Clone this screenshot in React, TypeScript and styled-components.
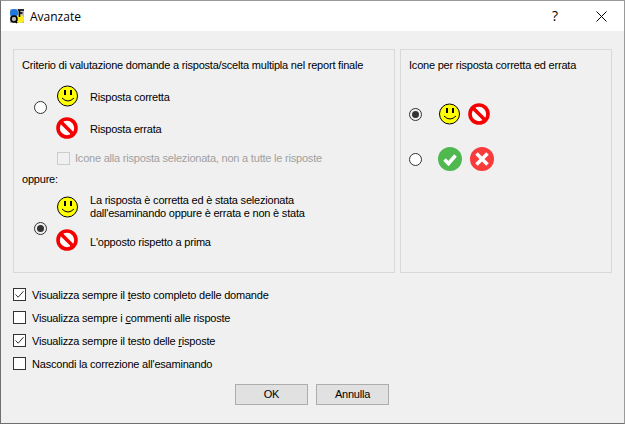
import React from "react";
import styled, { createGlobalStyle } from "styled-components";

const Global = createGlobalStyle`
  html, body { margin: 0; padding: 0; background: #f0f0f0; }
  body { font-family: "Liberation Sans", Arial, sans-serif; font-size: 11px; letter-spacing: -0.21px; color: #000; }
`;

const Win = styled.div`
  width: 625px; height: 424px; box-sizing: border-box;
  border: 1px solid #6f6f6f; border-top-color: #9a9a9a; border-right-color: #9a9a9a;
  display: flex; flex-direction: column; background: #f0f0f0; overflow: hidden;
`;
const TitleBar = styled.div`
  height: 30px; background: #fff; display: flex; align-items: center; flex: none;
`;
const AppIcon = styled.svg`width: 16px; height: 16px; margin-left: 8px; flex: none;`;
const Title = styled.div`margin-left: 5px; font-family: "Open Sans", sans-serif; font-size: 12px; letter-spacing: 0; flex: 1; color: #000;`;
const Help = styled.div`width: 46px; text-align: center; font-family: "Open Sans", sans-serif; font-size: 14px; letter-spacing: 0; line-height: 16px;`;
const CloseBtn = styled.div`width: 46px; height: 30px; display: flex; align-items: center; justify-content: center;`;

const Content = styled.div`flex: 1; display: flex; flex-direction: column; padding: 18px 12px 0;`;
const Panels = styled.div`display: flex; gap: 5px; height: 224px;`;
const Panel = styled.div<{ $w: number }>`
  width: ${p => p.$w}px; box-sizing: border-box; border: 1px solid #d9d9d9;
  padding: 7px 8px 0; display: flex; flex-direction: column;
`;
const Line = styled.div`line-height: 16px; white-space: nowrap;`;
const Group = styled.div<{ $mt: number; $gap: number }>`
  display: grid; grid-template-columns: 34px 34px 1fr; margin-top: ${p => p.$mt}px; row-gap: ${p => p.$gap}px;
`;
const RadioCell = styled.div<{ $mt: number }>`
  grid-column: 1; grid-row: 1 / span 2; margin-left: 12px; margin-top: ${p => p.$mt}px;
`;
const IconCell = styled.div`grid-column: 2; height: 22px; align-self: center;`;
const TextCell = styled.div`grid-column: 3; align-self: center; line-height: 13px; white-space: nowrap;`;
const LowText = styled(TextCell)<{ $pt: number }>`padding-top: ${p => p.$pt}px;`;
const DisabledRow = styled.div`
  display: flex; align-items: center; gap: 5px; margin-top: 13px; margin-left: 35px; color: #a0a0a0; line-height: 13px;
`;
const Oppure = styled(Line)`margin-top: 6px;`;
const RadioCircle = styled.span<{ $on?: boolean }>`
  display: block; width: 13px; height: 13px; box-sizing: border-box; border-radius: 50%; flex: none;
  border: 1px solid #333; background: ${p => (p.$on ? "transparent" : "#fff")}; position: relative;
  ${p => p.$on ? `&::after { content: ""; position: absolute; left: 2px; top: 2px; width: 7px; height: 7px; border-radius: 50%; background: #333; }` : ""}
`;
const Box = styled.span<{ $off?: boolean }>`
  display: flex; width: 13px; height: 13px; box-sizing: border-box; flex: none;
  border: 1px solid ${p => (p.$off ? "#cccccc" : "#333")}; background: ${p => (p.$off ? "#f0f0f0" : "#fff")};
  align-items: center; justify-content: center;
`;
const IconRow = styled.div<{ $mt: number }>`
  display: flex; align-items: center; margin-top: ${p => p.$mt}px;
`;
const IconPair = styled.div<{ $gap: number; $ml: number }>`
  display: flex; align-items: center; gap: ${p => p.$gap}px; margin-left: ${p => p.$ml}px;
`;
const Checks = styled.div`display: flex; flex-direction: column; margin-top: 15px; gap: 10px;`;
const CheckRow = styled.div`display: flex; align-items: center; gap: 6px; height: 13px; line-height: 13px; white-space: nowrap;`;
const CheckText = styled.span`padding-top: 2px;`;
const U = styled.span`text-decoration: underline;`;
const Buttons = styled.div`display: flex; gap: 8px; margin-top: 14px; margin-left: 222px;`;
const Btn = styled.button`
  width: 73px; height: 21px; box-sizing: border-box; padding: 0; border: 1px solid #adadad; background: #e1e1e1;
  font: inherit; letter-spacing: inherit; color: #000; line-height: 17px;
`;

const Smile = () => (
  <svg width="22" height="22" viewBox="0 0 22 22" shapeRendering="crispEdges" display="block">
    <circle cx="11.5" cy="11" r="10" fill="#ffff00" stroke="#000" strokeWidth="1" shapeRendering="auto" />
    <rect x="8" y="5" width="2" height="5" fill="#000" />
    <rect x="14" y="5" width="2" height="5" fill="#000" />
    <path d="M6 13q6 6 12 0" fill="none" stroke="#000" strokeWidth="1" shapeRendering="auto" />
  </svg>
);
const Stop = () => (
  <svg width="22" height="22" viewBox="0 0 22 22" display="block">
    <circle cx="11" cy="11" r="9" fill="#fff" stroke="#f50000" strokeWidth="3.6" />
    <path d="M5 5L17 17" stroke="#f50000" strokeWidth="3.6" />
  </svg>
);
const Ok = () => (
  <svg width="24" height="24" viewBox="0 0 24 24" display="block">
    <circle cx="12" cy="12" r="12" fill="#4fb84f" />
    <path d="M6.5 12.5L10.5 16.5L17.5 8.5" fill="none" stroke="#fff" strokeWidth="3.6" />
  </svg>
);
const Ko = () => (
  <svg width="24" height="24" viewBox="0 0 24 24" display="block">
    <circle cx="12" cy="12" r="12" fill="#f83c3c" />
    <path d="M6.5 6.5L17.5 17.5M17.5 6.5L6.5 17.5" fill="none" stroke="#fff" strokeWidth="3.6" />
  </svg>
);
const Tick = () => (
  <svg width="11" height="11" viewBox="0 0 11 11">
    <path d="M1.5 5.5L4.2 8.2L9.5 2.2" fill="none" stroke="#333" strokeWidth="1" />
  </svg>
);

export default function App() {
  return (
    <Win>
      <Global />
      <TitleBar>
        <AppIcon viewBox="0 0 16 16">
          <rect x="1" y="1" width="14" height="14" fill="#b8b8b8" />
          <circle cx="5" cy="5" r="4" fill="#1f78e0" />
          <circle cx="11" cy="11" r="4" fill="#ffef20" />
          <path d="M9 2h6M10.5 2v7M10.5 5h3" stroke="#000" strokeWidth="1.6" fill="none" />
          <circle cx="5" cy="11" r="3" fill="none" stroke="#000" strokeWidth="1.6" />
          <path d="M6 13l2 2" stroke="#000" strokeWidth="1.6" />
        </AppIcon>
        <Title>Avanzate</Title>
        <Help>?</Help>
        <CloseBtn>
          <svg width="11" height="11" viewBox="0 0 11 11"><path d="M0.5 0.5L10.5 10.5M10.5 0.5L0.5 10.5" stroke="#000" fill="none" /></svg>
        </CloseBtn>
      </TitleBar>
      <Content>
        <Panels>
          <Panel $w={382}>
            <Line>Criterio di valutazione domande a risposta/scelta multipla nel report finale</Line>
            <Group $mt={12} $gap={10}>
              <RadioCell $mt={16}><RadioCircle /></RadioCell>
              <IconCell><Smile /></IconCell>
              <LowText $pt={2}>Risposta corretta</LowText>
              <IconCell><Stop /></IconCell>
              <LowText $pt={2}>Risposta errata</LowText>
            </Group>
            <DisabledRow><Box $off />Icone alla risposta selezionata, non a tutte le risposte</DisabledRow>
            <Oppure>oppure:</Oppure>
            <Group $mt={7} $gap={9}>
              <RadioCell $mt={28}><RadioCircle $on /></RadioCell>
              <IconCell><Smile /></IconCell>
              <TextCell>La risposta è corretta ed è stata selezionata<br />dall'esaminando oppure è errata e non è stata</TextCell>
              <IconCell><Stop /></IconCell>
              <LowText $pt={4}>L'opposto rispetto a prima</LowText>
            </Group>
          </Panel>
          <Panel $w={212}>
            <Line>Icone per risposta corretta ed errata</Line>
            <IconRow $mt={30}><RadioCircle $on /><IconPair $gap={8} $ml={16}><Smile /><Stop /></IconPair></IconRow>
            <IconRow $mt={22}><RadioCircle /><IconPair $gap={8} $ml={16}><Ok /><Ko /></IconPair></IconRow>
          </Panel>
        </Panels>
        <Checks>
          <CheckRow><Box><Tick /></Box><CheckText>Visualizza sempre il <U>t</U>esto completo delle domande</CheckText></CheckRow>
          <CheckRow><Box /><CheckText>Visualizza sempre i <U>c</U>ommenti alle risposte</CheckText></CheckRow>
          <CheckRow><Box><Tick /></Box><CheckText>Visualizza sempre il testo delle <U>r</U>isposte</CheckText></CheckRow>
          <CheckRow><Box /><CheckText>Nascondi la correzione all'esaminando</CheckText></CheckRow>
        </Checks>
        <Buttons><Btn>OK</Btn><Btn>Annulla</Btn></Buttons>
      </Content>
    </Win>
  );
}
